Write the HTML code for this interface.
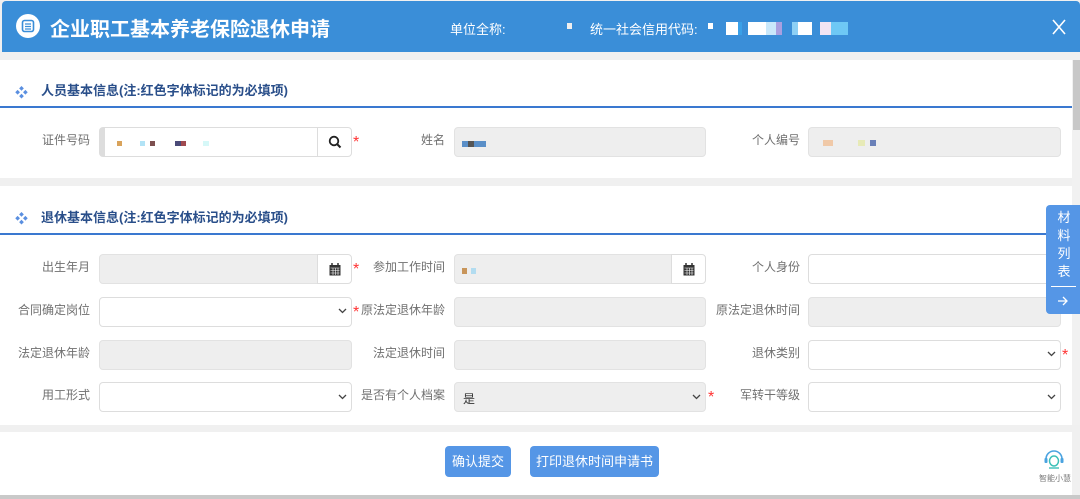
<!DOCTYPE html>
<html><head><meta charset="utf-8"><style>
*{margin:0;padding:0;box-sizing:border-box}
body{width:1080px;height:499px;overflow:hidden;background:#f0f0f0;font-family:"Liberation Sans","Noto Sans CJK SC",sans-serif;position:relative}
.a{position:absolute}
.hdr{left:2px;top:1px;width:1078px;height:51px;background:#3a8ed8;border-radius:4px 4px 0 0}
.panel{background:#fff}
.sec{font-size:13px;font-weight:bold;color:#2a4f8a}
.line{height:2px;background:#3a78d0;left:0;width:1072px}
.lbl{font-size:12px;color:#707070;text-align:right;width:120px}
.in{height:30px;border:1px solid #ddd;border-radius:4px;background:#fff}
.g{background:#eee;border-color:#e2e2e2}
.star{color:#f33;font-size:16px}
.btnr{width:35px;height:30px;border:1px solid #ddd;border-radius:0 4px 4px 0;background:#fff;display:flex;align-items:center;justify-content:center}
.chev{width:9px;height:6px}
.btn{background:#5596e6;color:#fff;font-size:13px;border-radius:4px;height:31px;line-height:31px;text-align:center}
</style></head><body>
<div class="a hdr"></div>
<div class="a" style="left:16px;top:14px;width:24px;height:24px;border-radius:50%;background:#fff"></div>
<svg class="a" style="left:21px;top:19px" width="14" height="14"><rect x="1.5" y="1.5" width="11" height="11" rx="2" fill="none" stroke="#3a8ed8" stroke-width="1.6"/><path d="M4 5h6M4 7.5h6M4 10h6" stroke="#3a8ed8" stroke-width="1.2"/></svg>
<div class="a" style="left:50px;top:13px;font-size:20px;font-weight:bold;color:#fff">企业职工基本养老保险退休申请</div>
<div class="a" style="left:450px;top:19px;font-size:13px;color:#fff">单位全称:</div>
<div class="a" style="left:567px;top:23px;width:5px;height:6px;background:#eee"></div>
<div class="a" style="left:590px;top:19px;font-size:13px;color:#fff">统一社会信用代码:</div>
<div class="a" style="left:708px;top:23px;width:5px;height:6px;background:#fff"></div>
<div class="a" style="left:726px;top:22px;width:122px;height:13px;background:linear-gradient(90deg,#fff 0 12px,#3aa0e8 12px 16px,#3a8ed8 16px 22px,#fff 22px 40px,#c9e8fb 40px 50px,#a9a0e0 50px 56px,#3a8ed8 56px 66px,#8dd0f5 66px 72px,#fff 72px 86px,#3a8ed8 86px 94px,#f1e4f3 94px 105px,#6ec8f5 105px 122px)"></div>
<svg class="a" style="left:1052px;top:19px" width="14" height="16"><path d="M1 1l12 14M13 1L1 15" stroke="#fff" stroke-width="1.6"/></svg>

<div class="a panel" style="left:0;top:60px;width:1072px;height:118px"></div>
<div class="a panel" style="left:0;top:186px;width:1072px;height:239px"></div>
<div class="a panel" style="left:0;top:432px;width:1072px;height:63px"></div>
<div class="a" style="left:1072px;top:60px;width:8px;height:365px;background:#f1f1f1"></div>
<div class="a" style="left:1073px;top:60px;width:7px;height:70px;background:#c8c8c8"></div>
<div class="a" style="left:0;top:495px;width:1080px;height:4px;background:#c9c9c9"></div>

<div class="a" style="left:15px;top:82px;color:#5a8fe0;font-size:13px">❖</div>
<div class="a sec" style="left:41px;top:80px">人员基本信息(注:红色字体标记的为必填项)</div>
<div class="a line" style="top:106px"></div>
<div class="a" style="left:15px;top:208px;color:#5a8fe0;font-size:13px">❖</div>
<div class="a sec" style="left:41px;top:207px">退休基本信息(注:红色字体标记的为必填项)</div>
<div class="a line" style="top:233px"></div>

<!-- row 1 -->
<div class="a lbl" style="left:-30px;top:131px">证件号码</div>
<div class="a in" style="left:99px;top:127px;width:219px;border-radius:4px 0 0 4px;border-left:6px solid #ddd"></div>
<div class="a" style="left:117px;top:141px;width:100px;height:5px;background:linear-gradient(90deg,#d9a35b 0 5px,#fff 5px 23px,#b2e3f6 23px 28px,#fff 28px 33px,#7d5050 33px 38px,#fff 38px 58px,#4a4a78 58px 64px,#a04a50 64px 69px,#fff 69px 86px,#d6f8f8 86px 92px,#fff 92px)"></div>
<div class="a btnr" style="left:317px;top:127px"><svg width="14" height="14"><circle cx="6" cy="6" r="4.3" fill="none" stroke="#222" stroke-width="1.8"/><path d="M9 9l3.5 3.5" stroke="#222" stroke-width="2"/></svg></div>
<div class="a star" style="left:353px;top:134px">*</div>
<div class="a lbl" style="left:325px;top:131px">姓名</div>
<div class="a in g" style="left:454px;top:127px;width:252px"></div>
<div class="a" style="left:462px;top:141px;width:24px;height:6px;background:linear-gradient(90deg,#5a8fc8 0 6px,#555 6px 12px,#5a8fc8 12px 24px)"></div>
<div class="a lbl" style="left:680px;top:131px">个人编号</div>
<div class="a in g" style="left:808px;top:127px;width:253px"></div>
<div class="a" style="left:823px;top:140px;width:54px;height:6px;background:linear-gradient(90deg,#f0c9a8 0 10px,#eee 10px 35px,#e7eab7 35px 42px,#eee 42px 47px,#6a80b8 47px 53px,#eee 53px)"></div>

<!-- row 2 -->
<div class="a lbl" style="left:-30px;top:258px">出生年月</div>
<div class="a in g" style="left:99px;top:254px;width:220px;border-radius:4px 0 0 4px"></div>
<div class="a btnr" style="left:317px;top:254px"><svg width="12" height="13"><rect x="0.5" y="2" width="11" height="10.5" fill="#333"/><path d="M3 0v3M9 0v3" stroke="#333" stroke-width="1.5"/><path d="M1.5 5h9M1.5 7.5h9M1.5 10h9M4 5v7M6.5 5v7M9 5v7" stroke="#fff" stroke-width=".6"/></svg></div>
<div class="a star" style="left:353px;top:261px">*</div>
<div class="a lbl" style="left:325px;top:258px">参加工作时间</div>
<div class="a in g" style="left:454px;top:254px;width:218px;border-radius:4px 0 0 4px"></div>
<div class="a" style="left:462px;top:268px;width:16px;height:6px;background:linear-gradient(90deg,#c8955a 0 5px,#eee 5px 9px,#b2dcf0 9px 14px,#eee 14px)"></div>
<div class="a btnr" style="left:671px;top:254px"><svg width="12" height="13"><rect x="0.5" y="2" width="11" height="10.5" fill="#333"/><path d="M3 0v3M9 0v3" stroke="#333" stroke-width="1.5"/><path d="M1.5 5h9M1.5 7.5h9M1.5 10h9M4 5v7M6.5 5v7M9 5v7" stroke="#fff" stroke-width=".6"/></svg></div>
<div class="a lbl" style="left:680px;top:258px">个人身份</div>
<div class="a in" style="left:808px;top:254px;width:253px"></div>

<!-- row 3 -->
<div class="a lbl" style="left:-30px;top:301px">合同确定岗位</div>
<div class="a in" style="left:99px;top:297px;width:253px"></div>
<svg class="a chev" style="left:338px;top:308px"><path d="M1 1l3.5 3.5L8 1" fill="none" stroke="#444" stroke-width="1.3"/></svg>
<div class="a star" style="left:353px;top:304px">*</div>
<div class="a lbl" style="left:325px;top:301px">原法定退休年龄</div>
<div class="a in g" style="left:454px;top:297px;width:252px"></div>
<div class="a lbl" style="left:680px;top:301px">原法定退休时间</div>
<div class="a in g" style="left:808px;top:297px;width:253px"></div>

<!-- row 4 -->
<div class="a lbl" style="left:-30px;top:344px">法定退休年龄</div>
<div class="a in g" style="left:99px;top:340px;width:253px"></div>
<div class="a lbl" style="left:325px;top:344px">法定退休时间</div>
<div class="a in g" style="left:454px;top:340px;width:252px"></div>
<div class="a lbl" style="left:680px;top:344px">退休类别</div>
<div class="a in" style="left:808px;top:340px;width:253px"></div>
<svg class="a chev" style="left:1047px;top:351px"><path d="M1 1l3.5 3.5L8 1" fill="none" stroke="#444" stroke-width="1.3"/></svg>
<div class="a star" style="left:1062px;top:347px">*</div>

<!-- row 5 -->
<div class="a lbl" style="left:-30px;top:386px">用工形式</div>
<div class="a in" style="left:99px;top:382px;width:253px"></div>
<svg class="a chev" style="left:338px;top:394px"><path d="M1 1l3.5 3.5L8 1" fill="none" stroke="#444" stroke-width="1.3"/></svg>
<div class="a lbl" style="left:325px;top:386px">是否有个人档案</div>
<div class="a in g" style="left:454px;top:382px;width:252px"></div>
<div class="a" style="left:463px;top:390px;font-size:12px;color:#333">是</div>
<svg class="a chev" style="left:692px;top:394px"><path d="M1 1l3.5 3.5L8 1" fill="none" stroke="#444" stroke-width="1.3"/></svg>
<div class="a star" style="left:708px;top:389px">*</div>
<div class="a lbl" style="left:680px;top:386px">军转干等级</div>
<div class="a in" style="left:808px;top:382px;width:253px"></div>
<svg class="a chev" style="left:1047px;top:394px"><path d="M1 1l3.5 3.5L8 1" fill="none" stroke="#444" stroke-width="1.3"/></svg>

<!-- side tab -->
<div class="a" style="left:1046px;top:205px;width:34px;height:109px;background:#5596e6;border-radius:4px 0 0 4px"></div>
<div class="a" style="left:1056px;top:209px;width:16px;font-size:13px;line-height:18px;color:#fff;text-align:center">材<br>料<br>列<br>表</div>
<div class="a" style="left:1051px;top:286px;width:25px;height:1px;background:#fff"></div>
<svg class="a" style="left:1057px;top:295px" width="12" height="12"><path d="M1 6h9M6 2l4 4-4 4" fill="none" stroke="#fff" stroke-width="1.3"/></svg>

<!-- footer -->
<div class="a btn" style="left:445px;top:446px;width:66px">确认提交</div>
<div class="a btn" style="left:530px;top:446px;width:129px">打印退休时间申请书</div>
<svg class="a" style="left:1042px;top:446px" width="24" height="24"><path d="M4 13a8 8 0 0116 0" fill="none" stroke="#4aa3e0" stroke-width="1.6"/><rect x="2.5" y="12" width="3" height="5" rx="1" fill="#4aa3e0"/><rect x="18.5" y="12" width="3" height="5" rx="1" fill="#4aa3e0"/><ellipse cx="12" cy="15" rx="4.5" ry="5" fill="none" stroke="#3cc0b8" stroke-width="1.5"/><path d="M7 22h10" stroke="#3cc0b8" stroke-width="1.4"/></svg>
<div class="a" style="left:1039px;top:473px;font-size:8px;color:#777">智能小慧</div>
</body></html>
